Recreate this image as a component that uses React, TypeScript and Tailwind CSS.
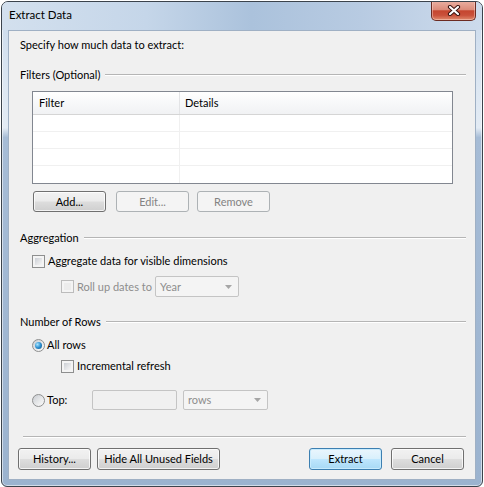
import React from 'react'

type BtnProps = {
  label: string
  className: string
  disabled?: boolean
  primary?: boolean
}

function Button({ label, className, disabled, primary }: BtnProps) {
  let look =
    'border-[#707070] text-black bg-[linear-gradient(180deg,#f2f2f2_0%,#ebebeb_48%,#dddddd_52%,#cfcfcf_100%)] shadow-[inset_0_0_0_1px_rgba(255,255,255,0.75)]'
  if (disabled) look = 'border-[#adb2b5] text-[#838383] bg-[#f4f4f4]'
  if (primary)
    look =
      'border-[#3c7fb1] text-black bg-[linear-gradient(180deg,#eaf6fd_0%,#d9f0fc_48%,#bee6fd_52%,#a7d9f5_100%)] shadow-[inset_0_0_0_1px_#c7ebfd]'
  return (
    <div className={`flex items-center justify-center rounded-[3px] border whitespace-nowrap ${look} ${className}`}>
      {label}
    </div>
  )
}

function Checkbox({ disabled }: { disabled?: boolean }) {
  return (
    <div
      className={`w-[13px] h-[13px] shrink-0 border p-[2px] ${
        disabled ? 'border-[#bcbcbc] bg-[#f4f4f4]' : 'border-[#8e8f8f] bg-[#f4f4f4]'
      }`}
    >
      <div
        className={`w-full h-full ${
          disabled
            ? 'bg-[#ececec]'
            : 'bg-[linear-gradient(135deg,#cbcfd5_0%,#e6e7e9_60%,#f6f6f6_100%)]'
        }`}
      />
    </div>
  )
}

function Radio({ checked }: { checked?: boolean }) {
  return (
    <div className="w-[13px] h-[13px] shrink-0 rounded-full border border-[#8e8f8f] bg-[linear-gradient(135deg,#c9ccd1_0%,#eaebec_60%,#fafafa_100%)] flex items-center justify-center">
      {checked && (
        <div className="w-[7px] h-[7px] rounded-full bg-[radial-gradient(circle_at_35%_35%,#a9e6ff_0%,#2d8fd0_50%,#12507f_100%)]" />
      )}
    </div>
  )
}

function Dropdown({ value, className }: { value: string; className: string }) {
  return (
    <div
      className={`flex items-center rounded-[2px] border border-[#c4c4c4] bg-[#f4f4f4] pl-[4px] text-[#8d8d8d] ${className}`}
    >
      <span className="flex-1">{value}</span>
      <svg width="7" height="4" viewBox="0 0 7 4" className="mr-[6px]">
        <path d="M0 0h7L3.5 4z" fill="#a6a6a6" />
      </svg>
    </div>
  )
}

function GroupHeader({ label }: { label: string }) {
  return (
    <div className="flex items-center h-4">
      <span>{label}</span>
      <div className="ml-[5px] flex-1 border-t border-b border-t-[#b5b5b5] border-b-white" />
    </div>
  )
}

function CloseButton() {
  return (
    <div className="-mt-px w-[45px] h-[20px] rounded-b-[5px] border border-t-0 border-[#6b2b22] bg-[linear-gradient(180deg,#eab0a2_0%,#dc8c7b_45%,#c5462f_52%,#c9503a_75%,#e08a6c_100%)] shadow-[inset_0_0_0_1px_rgba(255,220,210,0.45)] flex items-center justify-center">
      <svg width="14" height="11" viewBox="0 0 14 11">
        <path d="M3 2l8 7M11 2l-8 7" stroke="#3b1410" strokeWidth="4.2" strokeLinecap="round" />
        <path d="M3 2l8 7M11 2l-8 7" stroke="#ffffff" strokeWidth="2.2" strokeLinecap="round" />
      </svg>
    </div>
  )
}

export default function App() {
  return (
    <div className="w-[484px] h-[487px] bg-white font-['Lato',sans-serif] text-[11px] leading-4 text-black">
      <div className="ml-px mt-px w-[482px] h-[486px] rounded-t-[7px] rounded-b-[6px] border border-[#3b434c] overflow-hidden flex flex-col bg-[linear-gradient(180deg,#c9d9eb_0%,#dde7f2_18%,#e3ebf4_26%,#a6bcd6_28%,#9bb3cf_100%)] shadow-[inset_0_0_0_1px_rgba(255,255,255,0.55)]">
        <div className="h-[28px] shrink-0 flex items-start pl-[7px] pr-[6px] bg-[linear-gradient(90deg,#d3e0ee_0%,#c5d6e9_30%,#abc2dc_52%,#b8cbe2_75%,#cddbec_100%)]">
          <span className="mt-[5px] flex-1 text-[11.5px]">Extract Data</span>
          <CloseButton />
        </div>

        <div className="flex-1 mx-[6px] mb-[6px] border border-[#9fb0c4] bg-[#f0f0f0] flex flex-col pl-[11px] pr-[9px] pt-[6px]">
          <div className="h-4">Specify how much data to extract:</div>

          <div className="mt-[14px]">
            <GroupHeader label="Filters (Optional)" />
          </div>

          <div className="mt-[8px] ml-[12px] w-[421px] h-[93px] border border-[#828790] bg-white flex flex-col">
            <div className="h-[23px] flex border-b border-[#d5d5d5] bg-[linear-gradient(180deg,#ffffff_0%,#f7f8f9_50%,#f1f2f4_100%)]">
              <div className="w-[147px] pl-[6px] flex items-center border-r border-[#e3e4e6]">Filter</div>
              <div className="flex-1 pl-[5px] flex items-center">Details</div>
            </div>
            {[0, 1, 2, 3].map((i) => (
              <div key={i} className={`h-[17px] flex ${i < 3 ? 'border-b border-[#f0f0f0]' : ''}`}>
                <div className="w-[147px] border-r border-[#f0f0f0]" />
              </div>
            ))}
          </div>

          <div className="mt-[7px] ml-[13px] flex">
            <Button label="Add..." className="w-[73px] h-[21px]" />
            <Button label="Edit..." disabled className="ml-[10px] w-[73px] h-[21px]" />
            <Button label="Remove" disabled className="ml-[8px] w-[73px] h-[21px]" />
          </div>

          <div className="mt-[18px]">
            <GroupHeader label="Aggregation" />
          </div>

          <div className="mt-[7px] ml-[12px] h-4 flex items-center">
            <Checkbox />
            <span className="ml-[3px]">Aggregate data for visible dimensions</span>
          </div>

          <div className="mt-[7px] ml-[41px] h-[21px] flex items-center">
            <Checkbox disabled />
            <span className="ml-[3px] w-[78px] whitespace-nowrap text-[#8d8d8d]">Roll up dates to</span>
            <Dropdown value="Year" className="w-[84px] h-[21px]" />
          </div>

          <div className="mt-[17px]">
            <GroupHeader label="Number of Rows" />
          </div>

          <div className="mt-[7px] ml-[12px] h-4 flex items-center">
            <Radio checked />
            <span className="ml-[2px]">All rows</span>
          </div>

          <div className="mt-[5px] ml-[41px] h-4 flex items-center">
            <Checkbox />
            <span className="ml-[3px]">Incremental refresh</span>
          </div>

          <div className="mt-[16px] ml-[12px] h-[20px] flex items-center">
            <Radio />
            <span className="ml-[2px] w-[45px]">Top:</span>
            <div className="w-[85px] h-[20px] rounded-[2px] border border-[#c4c4c4] bg-[#f0f0f0]" />
            <Dropdown value="rows" className="ml-[6px] w-[85px] h-[20px]" />
          </div>

          <div className="mt-[26px] ml-[3px] border-t border-b border-t-[#b5b5b5] border-b-white" />

          <div className="mt-[10px] -ml-[2px] mr-[2px] flex">
            <Button label="History..." className="w-[73px] h-[22px]" />
            <Button label="Hide All Unused Fields" className="ml-[6px] w-[123px] h-[22px]" />
            <Button label="Extract" primary className="ml-auto w-[73px] h-[22px]" />
            <Button label="Cancel" className="ml-[9px] w-[73px] h-[22px]" />
          </div>
        </div>
      </div>
    </div>
  )
}
